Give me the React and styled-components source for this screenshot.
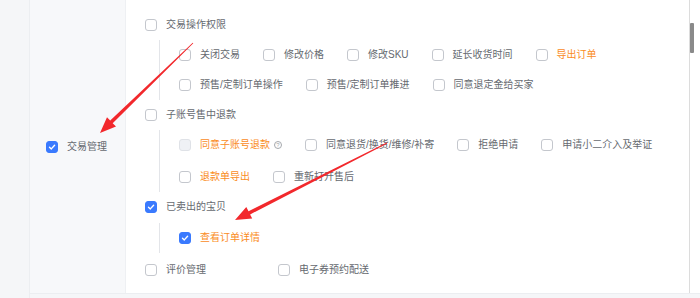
import React from "react"
import styled, { createGlobalStyle } from "styled-components"

const GlobalStyle = createGlobalStyle`
  html, body {
    margin: 0;
    padding: 0;
    background: #f5f6f8;
  }
  body {
    font-family: "Liberation Sans", "Noto Sans CJK SC", sans-serif;
  }
`

const Page = styled.div`
  position: relative;
  width: 700px;
  height: 298px;
  display: flex;
  background: #f5f6f8;
  overflow: hidden;
`
const Gutter = styled.div`
  width: 29px;
  border-right: 1px solid #eceef1;
  background: #f5f6f8;
`
const Frame = styled.div`
  flex: 1;
  display: flex;
  height: 293px;
  border-bottom: 1px solid #eceef1;
  background: #fff;
`
const Sidebar = styled.div`
  width: 79px;
  padding-left: 16px;
  display: flex;
  align-items: center;
  background: #f7f8fa;
  border-right: 1px solid #eef0f3;
  padding-top: 1px;
`
const Content = styled.div`
  flex: 1;
  padding: 10px 0 0 19px;
`
const ScrollTrack = styled.div`
  width: 10px;
  border-left: 1px solid #dcdcdc;
  padding-top: 23px;
  background: #fff;
`
const Thumb = styled.div`
  width: 4px;
  height: 30px;
  border-radius: 1px;
  background: #8a8a8a;
`
const Row = styled.div`
  display: flex;
  align-items: center;
  gap: ${p => p.$gap || 23}px;
  height: 30px;
  margin-top: ${p => p.$shift || 0}px;
`
const SubList = styled.div`
  margin-left: 14px;
  padding-left: 19px;
  border-left: 1px solid #e3e5e9;
`
const Item = styled.label`
  display: flex;
  align-items: center;
  gap: 9px;
  font-size: 10px;
  line-height: 12px;
  white-space: nowrap;
  color: ${p => (p.$orange ? "#fa8c1e" : "#666a70")};
`
const Box = styled.span`
  box-sizing: border-box;
  width: 12px;
  height: 12px;
  border-radius: 3px;
  display: flex;
  align-items: center;
  justify-content: center;
  border: 1px solid
    ${p => (p.$checked ? "#3a7afe" : p.$disabled ? "#dfe2e7" : "#c4c7cd")};
  background: ${p =>
    p.$checked ? "#3a7afe" : p.$disabled ? "#eff1f5" : "#fff"};
`
const Help = styled.span`
  box-sizing: border-box;
  width: 8px;
  height: 8px;
  margin-left: -5px;
  border: 1px solid #a5a8ad;
  border-radius: 50%;
  font-size: 6px;
  line-height: 6px;
  text-align: center;
  color: #a5a8ad;
`
const Overlay = styled.svg`
  position: absolute;
  left: 0;
  top: 0;
  pointer-events: none;
`

const Check = ({ checked, disabled, orange, help, children }) => (
  <Item $orange={orange}>
    <Box $checked={checked} $disabled={disabled}>
      {checked && (
        <svg width="8" height="8" viewBox="0 0 8 8">
          <path
            d="M1.5 4.2 L3.3 5.9 L6.6 2.3"
            fill="none"
            stroke="#fff"
            strokeWidth="1.4"
            strokeLinecap="round"
            strokeLinejoin="round"
          />
        </svg>
      )}
    </Box>
    {children}
    {help && <Help>?</Help>}
  </Item>
)

// tapered annotation arrow from (x1,y1) to tip (x2,y2)
const arrowPoints = (x1, y1, x2, y2) => {
  const dx = x2 - x1
  const dy = y2 - y1
  const len = Math.hypot(dx, dy)
  const ux = dx / len
  const uy = dy / len
  const nx = -uy
  const ny = ux
  const head = 16
  const bx = x2 - ux * head
  const by = y2 - uy * head
  const p = (x, y) => `${x.toFixed(1)},${y.toFixed(1)}`
  return [
    p(x1 + nx * 0.4, y1 + ny * 0.4),
    p(bx + nx * 1.8, by + ny * 1.8),
    p(bx + nx * 6.5, by + ny * 6.5),
    p(x2, y2),
    p(bx - nx * 6.5, by - ny * 6.5),
    p(bx - nx * 1.8, by - ny * 1.8),
    p(x1 - nx * 0.4, y1 - ny * 0.4),
  ].join(" ")
}

const App = () => (
  <>
    <GlobalStyle />
    <Page>
      <Gutter />
      <Frame>
        <Sidebar>
          <Check checked>交易管理</Check>
        </Sidebar>
        <Content>
          <Row>
            <Check>交易操作权限</Check>
          </Row>
          <SubList>
            <Row>
              <Check>关闭交易</Check>
              <Check>修改价格</Check>
              <Check>修改SKU</Check>
              <Check>延长收货时间</Check>
              <Check orange>导出订单</Check>
            </Row>
            <Row>
              <Check>预售/定制订单操作</Check>
              <Check>预售/定制订单推进</Check>
              <Check>同意退定金给买家</Check>
            </Row>
          </SubList>
          <Row>
            <Check>子账号售中退款</Check>
          </Row>
          <SubList>
            <Row>
              <Check disabled orange help>
                同意子账号退款
              </Check>
              <Check>同意退货/换货/维修/补寄</Check>
              <Check>拒绝申请</Check>
              <Check>申请小二介入及举证</Check>
            </Row>
            <Row $shift={2}>
              <Check orange>退款单导出</Check>
              <Check>重新打开售后</Check>
            </Row>
          </SubList>
          <Row>
            <Check checked>已卖出的宝贝</Check>
          </Row>
          <SubList>
            <Row $shift={1}>
              <Check checked orange>
                查看订单详情
              </Check>
            </Row>
          </SubList>
          <Row $shift={2} $gap={72}>
            <Check>评价管理</Check>
            <Check>电子券预约配送</Check>
          </Row>
        </Content>
        <ScrollTrack>
          <Thumb />
        </ScrollTrack>
      </Frame>
      <Overlay width="700" height="298" viewBox="0 0 700 298">
        <polygon points={arrowPoints(193, 43, 100, 133)} fill="#f2282c" />
        <polygon points={arrowPoints(387, 143, 235, 220)} fill="#f2282c" />
      </Overlay>
    </Page>
  </>
)

export default App
